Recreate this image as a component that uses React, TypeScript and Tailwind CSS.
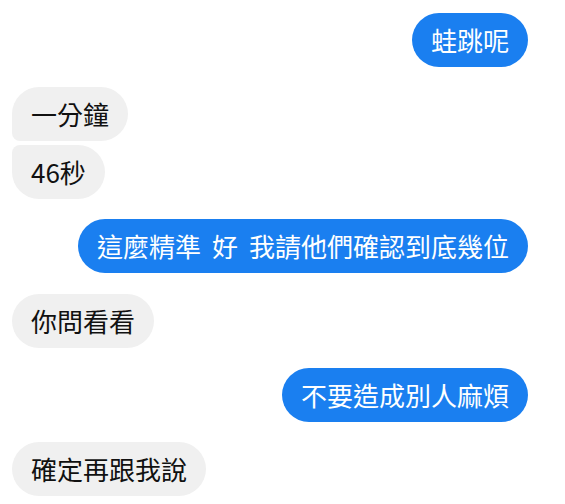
import React from "react";

const font = { fontFamily: '"Noto Sans CJK TC", "Noto Sans", sans-serif' };

function Blue({ children, className = "" }: { children: React.ReactNode; className?: string }) {
  return (
    <div className={`flex justify-end pr-[37px] ${className}`}>
      <div className="bg-[#1a7ff0] text-white text-[26px] leading-[54px] h-[54px] px-[19px] rounded-[27px] whitespace-pre">
        {children}
      </div>
    </div>
  );
}

function Gray({ children, className = "", round = "rounded-[27px]" }: { children: React.ReactNode; className?: string; round?: string }) {
  return (
    <div className={`flex justify-start pl-[12px] ${className}`}>
      <div className={`bg-[#f0f0f0] text-[#111] text-[26px] leading-[54px] h-[54px] px-[19px] whitespace-pre ${round}`}>
        {children}
      </div>
    </div>
  );
}

const Sp = () => <span className="inline-block w-[11px]" />;

export default function App() {
  return (
    <div className="w-[565px] h-[504px] bg-white overflow-hidden flex flex-col pt-[13px]" style={font}>
      <Blue>蛙跳呢</Blue>
      <Gray className="mt-[20px]" round="rounded-[27px] rounded-bl-[8px]">一分鐘</Gray>
      <Gray className="mt-[4px]" round="rounded-[27px] rounded-tl-[8px]">46秒</Gray>
      <Blue className="mt-[20px]">
        這麼精準<Sp />好<Sp />我請他們確認到底幾位
      </Blue>
      <Gray className="mt-[21px]">你問看看</Gray>
      <Blue className="mt-[20px]">不要造成別人麻煩</Blue>
      <Gray className="mt-[20px]">確定再跟我說</Gray>
    </div>
  );
}
